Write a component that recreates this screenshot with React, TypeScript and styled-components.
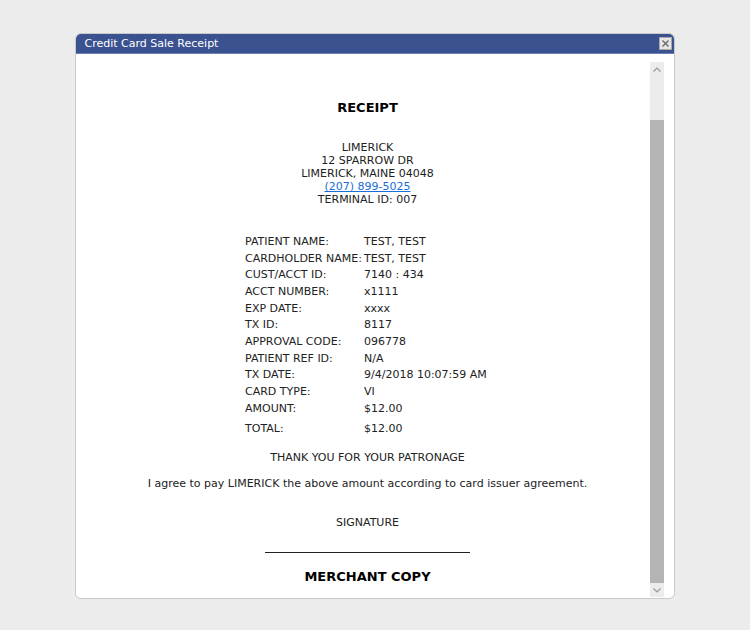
import { Fragment } from 'react';
import styled, { createGlobalStyle } from 'styled-components';

const GlobalStyle = createGlobalStyle`
  html, body {
    margin: 0;
    padding: 0;
    background: #ececec;
  }
  body {
    font-family: "DejaVu Sans", Verdana, sans-serif;
  }
`;

const Page = styled.div`
  width: 750px;
  height: 630px;
  padding-top: 33px;
  box-sizing: border-box;
  display: flex;
  justify-content: center;
`;

const Dialog = styled.div`
  width: 600px;
  height: 566px;
  margin-left: -1px;
  box-sizing: border-box;
  display: flex;
  flex-direction: column;
  background: #fff;
  border: 1px solid #c9c9c9;
  border-radius: 6px;
  overflow: hidden;
`;

const TitleBar = styled.div`
  height: 19px;
  flex: none;
  display: flex;
  align-items: center;
  justify-content: space-between;
  padding: 0 2px 0 9px;
  background: #3b5291;
  border-bottom: 1px solid #6d80b3;
  color: #fff;
  font-size: 11px;
`;

const CloseButton = styled.button`
  width: 13px;
  height: 13px;
  padding: 0;
  display: flex;
  align-items: center;
  justify-content: center;
  background: #e6e6e6;
  border: 1px solid #a9a9a9;
  svg {
    display: block;
  }
`;

const Body = styled.div`
  flex: 1;
  display: flex;
  padding: 8px 10px 1px 0;
  min-height: 0;
`;

const Receipt = styled.div`
  flex: 1;
  display: flex;
  flex-direction: column;
  align-items: center;
  padding: 38px 0 0 10px;
  font-size: 11px;
  color: #222;
`;

const Heading = styled.div<{ $top?: number }>`
  font-size: 13px;
  font-weight: bold;
  line-height: 16px;
  margin-top: ${({ $top }) => $top ?? 0}px;
  color: #000;
`;

const Address = styled.div`
  margin-top: 25px;
  text-align: center;
  line-height: 13px;
  a {
    color: #1a6ed8;
    text-decoration: underline;
  }
`;

const Details = styled.div`
  width: 245px;
  margin-top: 27px;
  display: grid;
  grid-template-columns: 119px 1fr;
  grid-auto-rows: 16.7px;
  align-items: center;
  white-space: nowrap;
`;

const Total = styled(Details)`
  margin-top: 4px;
`;

const Line = styled.div<{ $top: number }>`
  margin-top: ${({ $top }) => $top}px;
  line-height: 13px;
  text-align: center;
`;

const SignLine = styled.div`
  width: 205px;
  margin-top: 23px;
  border-bottom: 1px solid #222;
`;

const ScrollBar = styled.div`
  width: 14px;
  flex: none;
  display: flex;
  flex-direction: column;
  background: #ececec;
`;

const Arrow = styled.div`
  height: 14px;
  flex: none;
  display: flex;
  align-items: center;
  justify-content: center;
  background: #ececec;
`;

const Track = styled.div`
  flex: 1;
  display: flex;
  flex-direction: column;
  justify-content: flex-end;
`;

const Thumb = styled.div`
  height: 463px;
  background: #b4b4b4;
`;

const rows: [string, string][] = [
  ['PATIENT NAME:', 'TEST, TEST'],
  ['CARDHOLDER NAME:', 'TEST, TEST'],
  ['CUST/ACCT ID:', '7140 : 434'],
  ['ACCT NUMBER:', 'x1111'],
  ['EXP DATE:', 'xxxx'],
  ['TX ID:', '8117'],
  ['APPROVAL CODE:', '096778'],
  ['PATIENT REF ID:', 'N/A'],
  ['TX DATE:', '9/4/2018 10:07:59 AM'],
  ['CARD TYPE:', 'VI'],
  ['AMOUNT:', '$12.00'],
];

export default function App() {
  return (
    <>
      <GlobalStyle />
      <Page>
        <Dialog>
          <TitleBar>
            <span>Credit Card Sale Receipt</span>
            <CloseButton aria-label="Close">
              <svg width="7" height="7" viewBox="0 0 7 7">
                <path d="M0.5 0.5 L6.5 6.5 M6.5 0.5 L0.5 6.5" stroke="#666" strokeWidth="1.3" />
              </svg>
            </CloseButton>
          </TitleBar>
          <Body>
            <Receipt>
              <Heading>RECEIPT</Heading>
              <Address>
                LIMERICK<br />
                12 SPARROW DR<br />
                LIMERICK, MAINE 04048<br />
                <a href="#">(207) 899-5025</a><br />
                TERMINAL ID: 007
              </Address>
              <Details>
                {rows.map(([label, value]) => (
                  <Fragment key={label}>
                    <span>{label}</span>
                    <span>{value}</span>
                  </Fragment>
                ))}
              </Details>
              <Total>
                <span>TOTAL:</span>
                <span>$12.00</span>
              </Total>
              <Line $top={14}>THANK YOU FOR YOUR PATRONAGE</Line>
              <Line $top={13}>I agree to pay LIMERICK the above amount according to card issuer agreement.</Line>
              <Line $top={26}>SIGNATURE</Line>
              <SignLine />
              <Heading $top={16}>MERCHANT COPY</Heading>
            </Receipt>
            <ScrollBar>
              <Arrow>
                <svg width="8" height="5" viewBox="0 0 8 5">
                  <path d="M0.5 4.5 L4 1 L7.5 4.5" fill="none" stroke="#9a9a9a" strokeWidth="1.2" />
                </svg>
              </Arrow>
              <Track>
                <Thumb />
              </Track>
              <Arrow>
                <svg width="8" height="5" viewBox="0 0 8 5">
                  <path d="M0.5 0.5 L4 4 L7.5 0.5" fill="none" stroke="#9a9a9a" strokeWidth="1.2" />
                </svg>
              </Arrow>
            </ScrollBar>
          </Body>
        </Dialog>
      </Page>
    </>
  );
}
